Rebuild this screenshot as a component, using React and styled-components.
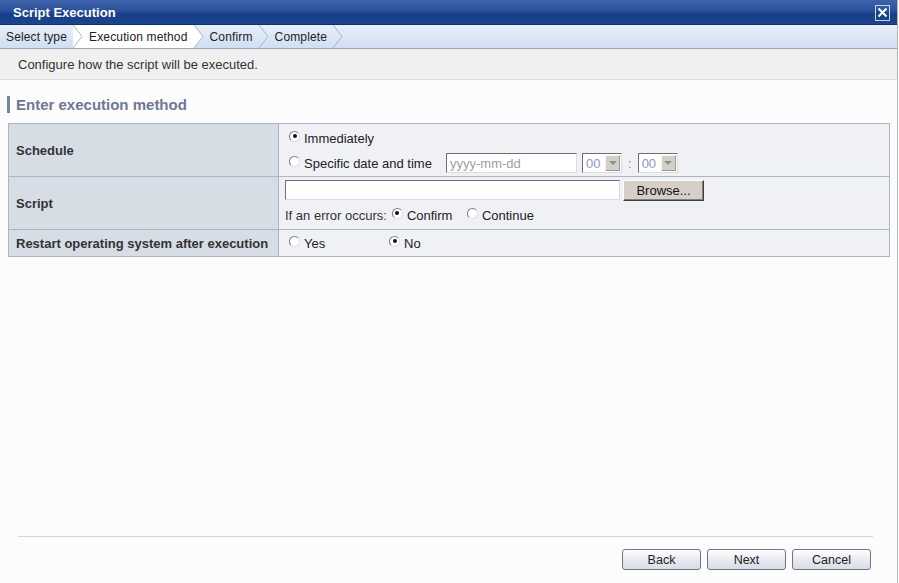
import styled, { createGlobalStyle } from "styled-components";

const Global = createGlobalStyle`
  html, body { margin: 0; padding: 0; background: #ffffff; }
  body { font-family: "Liberation Sans", Arial, sans-serif; font-size: 13px; color: #333; }
`;

const Window = styled.div`
  width: 897px;
  height: 583px;
  border-right: 1px solid #b4b8bf;
  background: #fcfcfc;
  display: flex;
  flex-direction: column;
`;

const TitleBar = styled.div`
  height: 24px;
  border-bottom: 1px solid #0f2f6e;
  background: linear-gradient(#3d63ab 0%, #2a519c 45%, #163f88 60%, #1a4590 100%);
  display: flex;
  align-items: center;
  justify-content: space-between;
  padding: 0 7px 0 13px;
`;

const Title = styled.div`
  color: #fff;
  font-weight: bold;
  font-size: 13px;
`;

const CloseBox = styled.div`
  width: 13px;
  height: 14px;
  border: 1px solid #c9d3e6;
  display: flex;
  align-items: center;
  justify-content: center;
  margin-top: 1px;
`;

const Steps = styled.div`
  height: 23px;
  border-bottom: 1px solid #9ea7b5;
  background: linear-gradient(#e9eff8, #cfdff3);
  display: flex;
  align-items: stretch;
  font-size: 12px;
`;

const Step = styled.div`
  padding: 0 6px;
  display: flex;
  align-items: center;
  background: ${({ $active }) => ($active ? "#ffffff" : "transparent")};
  color: #222;
  letter-spacing: 0.15px;
`;

const Description = styled.div`
  height: 30px;
  border-bottom: 1px solid #d8dce1;
  background: #f0f0f0;
  display: flex;
  align-items: center;
  padding-left: 18px;
  color: #333;
`;

const Body = styled.div`
  flex: 1;
  padding: 16px 8px 0 8px;
  display: flex;
  flex-direction: column;
`;

const Heading = styled.div`
  border-left: 3px solid #7a8397;
  padding-left: 6px;
  margin-left: -1px;
  height: 17px;
  line-height: 17px;
  font-size: 15px;
  font-weight: bold;
  color: #6e7891;
  margin-bottom: 10px;
`;

const Table = styled.table`
  width: 882px;
  border-collapse: collapse;
  border: 1px solid #aab6c6;
`;

const Label = styled.td`
  width: 255px;
  background: #d6dde5;
  border: 1px solid #aab6c6;
  font-weight: bold;
  color: #333;
  padding: 0 7px;
  height: ${({ $h }) => $h}px;
  white-space: nowrap;
`;

const Value = styled.td`
  background: #eff1f4;
  border: 1px solid #aab6c6;
  padding: 0 6px;
  vertical-align: middle;
`;

const Line = styled.div`
  display: flex;
  align-items: center;
  height: ${({ $h }) => $h || 24}px;
  padding-left: ${({ $indent }) => $indent || 0}px;
  gap: ${({ $gap }) => $gap || 0}px;
`;

const Choice = styled.label`
  display: flex;
  align-items: center;
  gap: 4px;
  color: #222;
  width: ${({ $w }) => ($w ? `${$w}px` : "auto")};
`;

const RadioDot = styled.span`
  width: 11px;
  height: 11px;
  border-radius: 50%;
  box-sizing: border-box;
  border: 1px solid;
  border-color: #7d7d7d #e0e0e0 #e0e0e0 #7d7d7d;
  background: #fff;
  display: inline-flex;
  align-items: center;
  justify-content: center;
  margin-top: -4px;
  &::after {
    content: "";
    width: 4px;
    height: 4px;
    border-radius: 50%;
    background: ${({ $on }) => ($on ? "#111" : "transparent")};
  }
`;

const Inset = styled.div`
  box-sizing: border-box;
  height: ${({ $h }) => $h || 20}px;
  width: ${({ $w }) => $w}px;
  border: 1px solid;
  border-color: #6f6f6f #dcdcdc #dcdcdc #6f6f6f;
  background: #fff;
  display: flex;
  align-items: center;
  padding-left: 3px;
  color: ${({ $muted }) => ($muted ? "#a0a0a0" : "#222")};
`;

const SelectBox = styled(Inset)`
  justify-content: space-between;
  padding: 1px;
  padding-left: 3px;
  color: #8b97c8;
`;

const Arrow = styled.span`
  width: 15px;
  height: 16px;
  background: #d4d0c8;
  border: 1px solid;
  border-color: #f4f4f4 #9a9a9a #9a9a9a #f4f4f4;
  box-sizing: border-box;
  display: flex;
  align-items: center;
  justify-content: center;
  &::after {
    content: "";
    border-left: 4px solid transparent;
    border-right: 4px solid transparent;
    border-top: 4px solid #8f8f8f;
  }
`;

const Colon = styled.span`
  color: #888;
`;

const ClassicButton = styled.div`
  box-sizing: border-box;
  width: 81px;
  height: 21px;
  background: #d4d0c8;
  border: 1px solid;
  border-color: #ffffff #404040 #404040 #ffffff;
  box-shadow: inset -1px -1px 0 #808080;
  display: flex;
  align-items: center;
  justify-content: center;
  font-size: 13px;
  color: #111;
`;

const Footer = styled.div`
  margin: auto 24px 0 18px;
  border-top: 1px solid #d2d6da;
  padding: 12px 2px 13px 0;
  display: flex;
  justify-content: flex-end;
  gap: 6px;
`;

const NavButton = styled.div`
  box-sizing: border-box;
  width: 79px;
  height: 21px;
  border: 1px solid #70757e;
  border-radius: 3px;
  background: linear-gradient(#ffffff, #e4e7ee 60%, #d9dde5);
  display: flex;
  align-items: center;
  justify-content: center;
  font-size: 12.5px;
  color: #222;
`;

function Chevron({ left = "transparent", right = "transparent" }) {
  return (
    <svg width="10" height="23" viewBox="0 0 10 23">
      <rect x="0" y="0" width="10" height="23" fill={right} />
      <polygon points="0,0 9,11.5 0,23" fill={left} />
      <polyline points="0,0 9,11.5 0,23" fill="none" stroke="#a9b4c4" strokeWidth="1" />
    </svg>
  );
}

function Radio({ on, children, w }) {
  return (
    <Choice $w={w}>
      <RadioDot $on={on} />
      {children}
    </Choice>
  );
}

function Select() {
  return (
    <SelectBox $w={40}>
      00
      <Arrow />
    </SelectBox>
  );
}

export default function App() {
  return (
    <>
      <Global />
      <Window>
        <TitleBar>
          <Title>Script Execution</Title>
          <CloseBox>
            <svg width="11" height="11" viewBox="0 0 11 11">
              <path d="M1.5 1.5 L9.5 9.5 M9.5 1.5 L1.5 9.5" stroke="#fff" strokeWidth="2" />
            </svg>
          </CloseBox>
        </TitleBar>
        <Steps>
          <Step>Select type</Step>
          <Chevron right="#ffffff" />
          <Step $active>Execution method</Step>
          <Chevron left="#ffffff" />
          <Step>Confirm</Step>
          <Chevron />
          <Step>Complete</Step>
          <Chevron />
        </Steps>
        <Description>Configure how the script will be executed.</Description>
        <Body>
          <Heading>Enter execution method</Heading>
          <Table>
            <tbody>
              <tr>
                <Label $h={52}>Schedule</Label>
                <Value>
                  <Line $indent={4} $h={26}>
                    <Radio on>Immediately</Radio>
                  </Line>
                  <Line $indent={4} $h={24}>
                    <Radio w={157}>Specific date and time</Radio>
                    <Inset $w={131} $muted>yyyy-mm-dd</Inset>
                    <Line $indent={5} $h={20} $gap={6}>
                      <Select />
                      <Colon>:</Colon>
                      <Select />
                    </Line>
                  </Line>
                </Value>
              </tr>
              <tr>
                <Label $h={52}>Script</Label>
                <Value>
                  <Line $h={24} $gap={3}>
                    <Inset $w={335} />
                    <ClassicButton>Browse...</ClassicButton>
                  </Line>
                  <Line $h={26} $gap={5}>
                    <span>If an error occurs:</span>
                    <Radio on w={70}>Confirm</Radio>
                    <Radio>Continue</Radio>
                  </Line>
                </Value>
              </tr>
              <tr>
                <Label $h={26}>Restart operating system after execution</Label>
                <Value>
                  <Line $indent={4} $h={26}>
                    <Radio w={100}>Yes</Radio>
                    <Radio on>No</Radio>
                  </Line>
                </Value>
              </tr>
            </tbody>
          </Table>
        </Body>
        <Footer>
          <NavButton>Back</NavButton>
          <NavButton>Next</NavButton>
          <NavButton>Cancel</NavButton>
        </Footer>
      </Window>
    </>
  );
}
